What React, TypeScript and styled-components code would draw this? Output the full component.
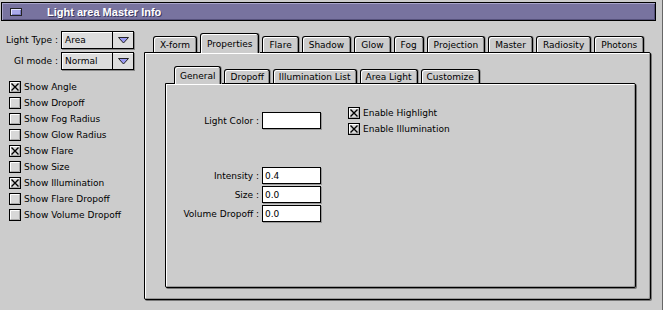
import styled, { createGlobalStyle } from 'styled-components';

const Global = createGlobalStyle`
  html, body { margin: 0; padding: 0; background: #cccccc; }
  body { font-family: "DejaVu Sans", "Liberation Sans", sans-serif; font-size: 9px; color: #000; }
`;

const Window = styled.div`
  width: 663px;
  height: 310px;
  box-sizing: border-box;
  background: #cccccc;
  border-right: 1px solid #666;
  display: flex;
  flex-direction: column;
  overflow: hidden;
`;

const TitleBar = styled.div`
  margin: 2px 6px 0 1px;
  height: 19px;
  box-sizing: border-box;
  border: 1px solid #000;
  background: #78739f;
  box-shadow: inset 1px 1px #a8a4ca, inset -1px -1px #55507a;
  display: flex;
  align-items: center;
  padding-left: 8px;
`;

const CloseBox = styled.div`
  width: 12px;
  height: 8px;
  box-sizing: border-box;
  border: 1px solid #222;
  background: #a9a9e8;
  box-shadow: inset 1px 1px #e4e4ff, inset -1px -1px #7a7ac0;
`;

const Title = styled.div`
  margin-left: 25px;
  color: #fff;
  font-family: "Liberation Sans", sans-serif;
  font-weight: bold;
  font-size: 11px;
  text-shadow: 1px 1px 0 #3c3860;
`;

const Body = styled.div`
  flex: 1;
  display: flex;
`;

const LeftPane = styled.div`
  width: 144px;
  padding-top: 10px;
  box-sizing: border-box;
  display: flex;
  flex-direction: column;
`;

const FieldRow = styled.div`
  display: flex;
  align-items: center;
  height: 18px;
  margin-bottom: 3px;
`;

const SideLabel = styled.div`
  width: 61px;
  text-align: right;
  padding-right: 3px;
  box-sizing: border-box;
  white-space: nowrap;
`;

const Select = styled.div`
  width: 73px;
  height: 18px;
  box-sizing: border-box;
  border: 1px solid #000;
  background: #dddddd;
  box-shadow: inset 1px 1px #fff, 1px 1px 0 #888;
  display: flex;
  align-items: stretch;
`;

const SelectText = styled.div`
  flex: 1;
  padding-left: 3px;
  display: flex;
  align-items: center;
`;

const SelectArrow = styled.div`
  width: 20px;
  border-left: 1px solid #000;
  display: flex;
  align-items: center;
  justify-content: center;
`;

const CheckList = styled.div`
  margin-top: 6px;
  padding-left: 9px;
  display: flex;
  flex-direction: column;
`;

const CheckRow = styled.div`
  display: flex;
  align-items: center;
  height: 16px;
  gap: 3px;
  white-space: nowrap;
`;

const MainArea = styled.div`
  flex: 1;
  padding: 12px 11px 10px 0;
  display: flex;
  flex-direction: column;
`;

const TabRow = styled.div<{ $inset: number; $h: number }>`
  display: flex;
  align-items: flex-end;
  gap: 3px;
  padding-left: ${(p) => p.$inset}px;
  height: ${(p) => p.$h}px;
  position: relative;
  z-index: 1;
`;

const Tab = styled.div<{ $active?: boolean; $h: number; $px: number }>`
  height: ${(p) => (p.$active ? p.$h + 1 : p.$h - 3)}px;
  margin-bottom: ${(p) => (p.$active ? -1 : 0)}px;
  box-sizing: border-box;
  padding: 0 ${(p) => p.$px}px;
  border: 1px solid #000;
  border-bottom: none;
  border-radius: 3px 3px 0 0;
  background: #cccccc;
  box-shadow: inset 1px 1px #fff, inset -1px 0 #888, 1px 0 0 #999;
  display: flex;
  align-items: center;
  white-space: nowrap;
`;

const Panel = styled.div<{ $pad: string }>`
  flex: 1;
  box-sizing: border-box;
  border: 1px solid #000;
  border-radius: 0 2px 2px 2px;
  background: #cccccc;
  box-shadow: inset 1px 1px #fff, inset -1px -1px #999, 1px 1px 0 #777;
  padding: ${(p) => p.$pad};
  display: flex;
  flex-direction: column;
`;

const InnerContent = styled.div`
  display: flex;
`;

const FormColumn = styled.div`
  display: flex;
  flex-direction: column;
  padding-top: 28px;
`;

const FormRow = styled.div<{ $gapTop?: number }>`
  display: flex;
  align-items: center;
  height: 17px;
  margin-top: ${(p) => p.$gapTop ?? 0}px;
`;

const FormLabel = styled.div`
  width: 96px;
  text-align: right;
  padding-right: 3px;
  box-sizing: border-box;
  white-space: nowrap;
`;

const TextBox = styled.div`
  width: 59px;
  height: 17px;
  box-sizing: border-box;
  border: 1px solid #000;
  background: #fff;
  box-shadow: 1px 1px 0 #999;
  padding-left: 2px;
  display: flex;
  align-items: center;
`;

const OptionColumn = styled.div`
  padding-top: 21px;
  margin-left: 27px;
  display: flex;
  flex-direction: column;
`;

const Arrow = () => (
  <svg width="11" height="7" viewBox="0 0 11 7">
    <polygon points="0.5,0.5 10.5,0.5 5.5,6" fill="#9a9af2" stroke="#222" strokeWidth="1" />
  </svg>
);

const Check = ({ on }: { on?: boolean }) => (
  <svg width="12" height="12" viewBox="0 0 12 12">
    <rect x="0.5" y="0.5" width="11" height="11" fill="#d8d8d8" stroke="#000" />
    <path d="M1.5 10.5V1.5H10.5" stroke="#fff" fill="none" />
    <path d="M1.5 10.5H10.5V1.5" stroke="#aaa" fill="none" />
    {on && <path d="M2.5 2.5L9.5 9.5M9.5 2.5L2.5 9.5" stroke="#000" strokeWidth="1.4" />}
  </svg>
);

const showItems: [string, boolean][] = [
  ['Show Angle', true],
  ['Show Dropoff', false],
  ['Show Fog Radius', false],
  ['Show Glow Radius', false],
  ['Show Flare', true],
  ['Show Size', false],
  ['Show Illumination', true],
  ['Show Flare Dropoff', false],
  ['Show Volume Dropoff', false],
];

const outerTabs = ['X-form', 'Properties', 'Flare', 'Shadow', 'Glow', 'Fog', 'Projection', 'Master', 'Radiosity', 'Photons'];
const innerTabs = ['General', 'Dropoff', 'Illumination List', 'Area Light', 'Customize'];

export default function App() {
  return (
    <Window>
      <Global />
      <TitleBar>
        <CloseBox />
        <Title>Light area Master Info</Title>
      </TitleBar>
      <Body>
        <LeftPane>
          <FieldRow>
            <SideLabel>Light Type :</SideLabel>
            <Select>
              <SelectText>Area</SelectText>
              <SelectArrow><Arrow /></SelectArrow>
            </Select>
          </FieldRow>
          <FieldRow>
            <SideLabel>GI mode :</SideLabel>
            <Select>
              <SelectText>Normal</SelectText>
              <SelectArrow><Arrow /></SelectArrow>
            </Select>
          </FieldRow>
          <CheckList>
            {showItems.map(([label, on]) => (
              <CheckRow key={label}>
                <Check on={on} />
                {label}
              </CheckRow>
            ))}
          </CheckList>
        </LeftPane>
        <MainArea>
          <TabRow $inset={9} $h={19}>
            {outerTabs.map((t) => (
              <Tab key={t} $h={19} $px={6} $active={t === 'Properties'}>{t}</Tab>
            ))}
          </TabRow>
          <Panel $pad="13px 14px 11px 20px">
            <TabRow $inset={9} $h={17}>
              {innerTabs.map((t) => (
                <Tab key={t} $h={17} $px={5} $active={t === 'General'}>{t}</Tab>
              ))}
            </TabRow>
            <Panel $pad="0">
              <InnerContent>
                <FormColumn>
                  <FormRow>
                    <FormLabel>Light Color :</FormLabel>
                    <TextBox />
                  </FormRow>
                  <FormRow $gapTop={38}>
                    <FormLabel>Intensity :</FormLabel>
                    <TextBox>0.4</TextBox>
                  </FormRow>
                  <FormRow $gapTop={2}>
                    <FormLabel>Size :</FormLabel>
                    <TextBox>0.0</TextBox>
                  </FormRow>
                  <FormRow $gapTop={2}>
                    <FormLabel>Volume Dropoff :</FormLabel>
                    <TextBox>0.0</TextBox>
                  </FormRow>
                </FormColumn>
                <OptionColumn>
                  <CheckRow>
                    <Check on />
                    Enable Highlight
                  </CheckRow>
                  <CheckRow>
                    <Check on />
                    Enable Illumination
                  </CheckRow>
                </OptionColumn>
              </InnerContent>
            </Panel>
          </Panel>
        </MainArea>
      </Body>
    </Window>
  );
}
